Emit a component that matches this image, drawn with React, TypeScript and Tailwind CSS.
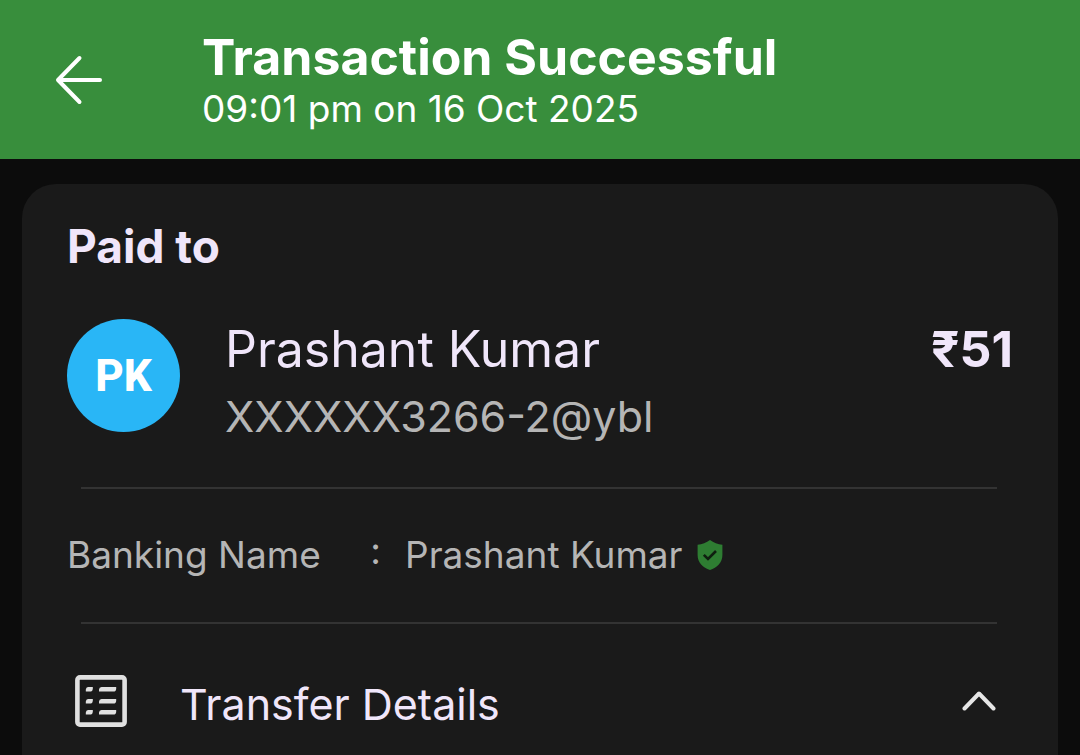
import React from "react";

const BackArrow = () => (
  <svg width="48" height="50" viewBox="0 0 48 50" fill="none" stroke="currentColor" strokeWidth="4" strokeLinecap="round" strokeLinejoin="round" aria-hidden="true">
    <path d="M24.5 3 L3 25 L24.5 47" />
    <path d="M4 25 H45" />
  </svg>
);

const VerifiedShield = () => (
  <svg width="26" height="30" viewBox="0 0 26 30" role="img" aria-label="Verified">
    <path d="M13 0 C9.5 2.6 5 4.3 0.6 4.8 V15 C0.6 22.5 6 27.5 13 30 C20 27.5 25.4 22.5 25.4 15 V4.8 C21 4.3 16.5 2.6 13 0 Z" fill="#2e7d32" />
    <path d="M6.8 14.8 L11 19 L19 11" fill="none" stroke="#0f1f10" strokeWidth="2.6" />
  </svg>
);

const ListBox = () => (
  <svg width="52" height="52" viewBox="0 0 52 52" aria-hidden="true">
    <rect x="2.4" y="2.4" width="47.2" height="47.2" rx="2.6" fill="none" stroke="#e0e0e0" strokeWidth="4.6" />
    {[12, 24, 35].map((y) => (
      <g key={y} transform={`translate(0 ${y})`} fill="#e0e0e0">
        <path d="M13 0 H17.8 V1.7 Q17.6 4.6 14.8 4.6 H10.8 V2.6 Q11 0 13 0 Z" />
        <path d="M26.5 0 H41.2 V1.7 Q41 4.6 38.3 4.6 H24 V2.6 Q24.2 0 26.5 0 Z" />
      </g>
    ))}
  </svg>
);

const ChevronUp = () => (
  <svg width="34" height="22" viewBox="0 0 34 22" fill="none" stroke="#e6e6e6" strokeWidth="4" strokeLinecap="round" strokeLinejoin="round" aria-hidden="true">
    <path d="M2.5 18.5 L17 3.5 L31.5 18.5" />
  </svg>
);

const Divider = () => <hr className="ml-[14px] mr-4 border-t-2 border-[#333333]" />;

const App = () => {
  return (
    <div className="min-h-screen flex flex-col bg-[#0c0c0c] font-['Inter',sans-serif]">
      <header className="flex items-center pt-7 pb-7 px-[55px] bg-[#388e3c] text-white">
        <button type="button" aria-label="Back" className="shrink-0">
          <BackArrow />
        </button>
        <div className="ml-[99px]">
          <h1 className="text-[50px] leading-[58px] font-bold">Transaction Successful</h1>
          <p className="text-[37px] leading-[45px]">09:01 pm on 16 Oct 2025</p>
        </div>
      </header>

      <main className="flex-1 mt-[25px] mx-[22px] px-[45px] pt-[34px] rounded-t-[34px] bg-[#1a1a1a] text-[#f0e6fa]">
        <h2 className="text-[46px] leading-[56px] font-bold">Paid to</h2>

        <div className="flex items-start mt-[45px]">
          <div className="flex shrink-0 items-center justify-center size-[113px] rounded-full bg-[#29b6f6] text-white text-[44px] font-extrabold font-['Roboto',sans-serif]">
            PK
          </div>
          <div className="flex-1 ml-[45px]">
            <p className="text-[50px] leading-[60px]">Prashant Kumar</p>
            <p className="mt-2 text-[43px] leading-[58px] text-[#b5b5b5]">XXXXXX3266-2@ybl</p>
          </div>
          <p className="text-[50px] leading-[60px] font-bold">₹51</p>
        </div>

        <div className="mt-[42px]">
          <Divider />
        </div>

        <dl className="flex items-center mt-[43px] mb-[45px] text-[37px] leading-[45px] text-[#b5b5b5]">
          <dt className="flex w-[338px] justify-between pr-6">
            <span>Banking Name</span>
            <span className="[font-feature-settings:'case']">:</span>
          </dt>
          <dd className="flex items-center gap-[14px]">
            Prashant Kumar
            <VerifiedShield />
          </dd>
        </dl>

        <Divider />

        <button type="button" aria-expanded="true" className="flex w-full items-start mt-[51px] pl-2 pr-[17px] text-left">
          <ListBox />
          <span className="flex-1 ml-[53px] text-[43px] leading-[58px]">Transfer Details</span>
          <span className="flex h-[52px] items-center">
            <ChevronUp />
          </span>
        </button>
      </main>
    </div>
  );
};

export default App;
